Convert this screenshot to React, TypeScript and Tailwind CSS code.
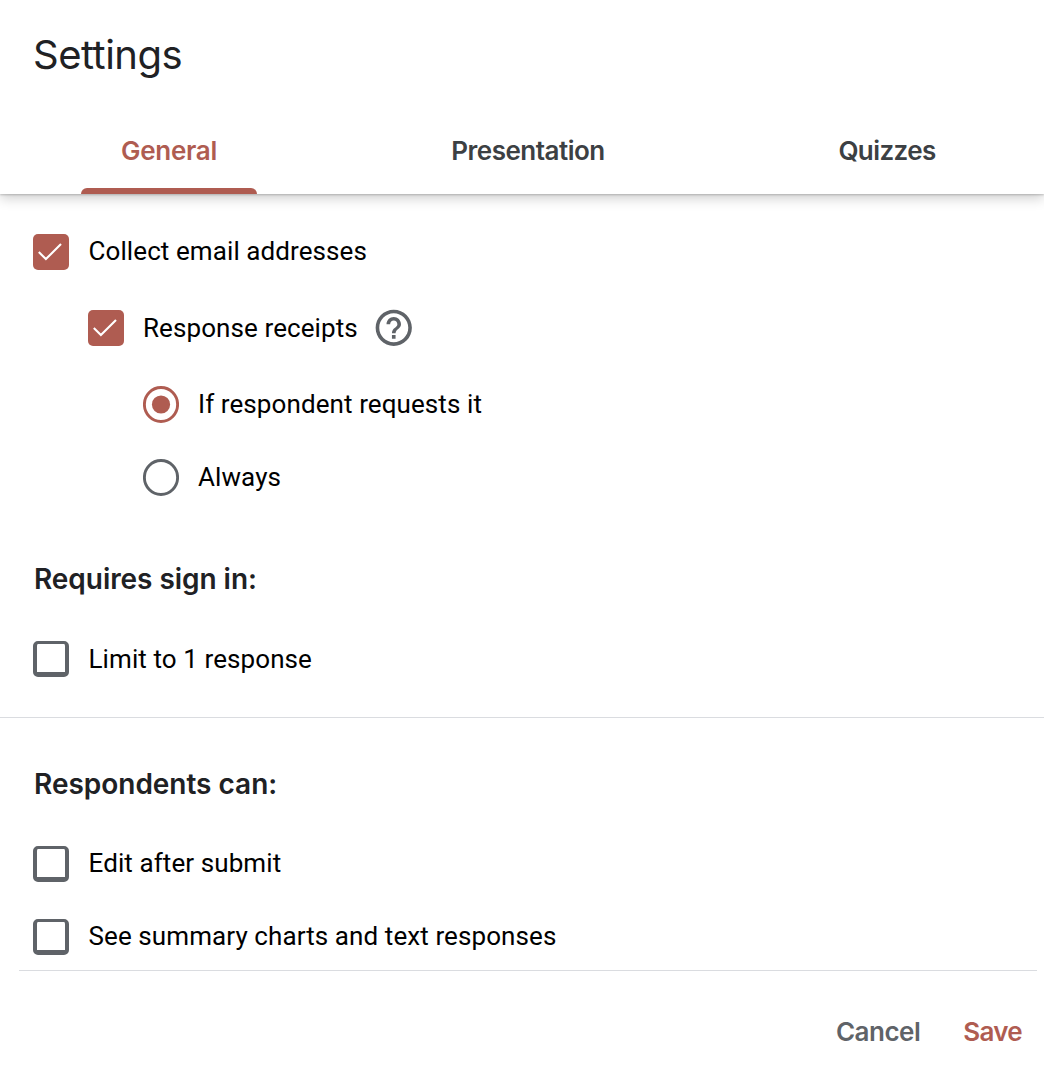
import type { ReactNode } from "react";
import { MdHelpOutline } from "react-icons/md";

const display = "font-['Inter',sans-serif]";

function Checkbox({ checked = false }: { checked?: boolean }) {
  if (checked) {
    return (
      <span className="block size-9 shrink-0 rounded-[5px] bg-[#af5c51]">
        <svg viewBox="0 0 36 36" className="size-9" fill="none" stroke="#fff" strokeWidth="2.1">
          <path d="M5.8 18.1l7.1 7L28 10" />
        </svg>
      </span>
    );
  }
  return (
    <span className="block size-9 shrink-0 rounded-[5px] border-x-4 border-t-3 border-b-5 border-[#5f6368]" />
  );
}

function Radio({ selected = false }: { selected?: boolean }) {
  return (
    <svg viewBox="0 0 36 37" className="h-[37px] w-9 shrink-0" fill="none">
      <ellipse cx="18" cy="18.5" rx="16.6" ry="17" stroke={selected ? "#af5c51" : "#5f6368"} strokeWidth="2.9" />
      {selected && <circle cx="18" cy="18.5" r="9.1" fill="#af5c51" />}
    </svg>
  );
}

function Option({ control, label, className = "", labelClass = "ml-[19px]", children }: { control: ReactNode; label: string; className?: string; labelClass?: string; children?: ReactNode }) {
  return (
    <div className={`flex h-9 items-center ${className}`}>
      {control}
      <span className={`text-[26px] leading-9 tracking-[0.09px] whitespace-nowrap text-black ${labelClass}`}>{label}</span>
      {children}
    </div>
  );
}

export default function App() {
  return (
    <div className="flex h-[1090px] w-[1044px] flex-col overflow-hidden bg-white font-['Roboto',sans-serif]">
      <header className="h-[194px] shrink-0 shadow-[0_1px_2px_rgba(0,0,0,0.2),0_4px_12px_rgba(0,0,0,0.2)]">
        <h1 className={`${display} pt-[30px] pl-[33px] text-[40px] leading-[50px] tracking-[-0.5px] text-[#202124]`}>Settings</h1>
        <nav className={`${display} mt-[28px] grid h-[86px] grid-cols-[338px_380px_338px] text-center text-[26px] font-semibold text-[#3c4043]`}>
          <div className="flex flex-col items-center justify-between pt-[23px] text-[#af5c51]">
            <span className="leading-[40px] tracking-[-0.3px]">General</span>
            <span className="h-1.5 w-44 rounded-t-[6px] bg-[#af5c51]" />
          </div>
          <div className="pt-[23px] leading-[40px] tracking-[-0.5px]">Presentation</div>
          <div className="pt-[23px] leading-[40px] tracking-[-0.6px]">Quizzes</div>
        </nav>
      </header>

      <section className="h-[524px] shrink-0 border-b border-[#dadce0] pt-10 pl-[33px]">
        <Option control={<Checkbox checked />} label="Collect email addresses" labelClass="ml-[19.5px] pb-0.5" />
        <Option control={<Checkbox checked />} label="Response receipts" className="mt-10 ml-[55px]">
          <MdHelpOutline className="-mt-px ml-[14.5px] size-[43.5px] text-[#5f6368]" />
        </Option>
        <Option control={<Radio selected />} label="If respondent requests it" className="mt-10 ml-[110px]" />
        <Option control={<Radio />} label="Always" className="mt-[37px] ml-[110px]" />
        <h2 className={`${display} mt-[64px] ml-px text-[28px] leading-[40px] font-semibold tracking-[-0.05px] text-[#202124]`}>Requires sign in:</h2>
        <Option control={<Checkbox />} label="Limit to 1 response" className="mt-[42px]" labelClass="ml-[19.5px]" />
      </section>

      <section className="h-[252px] shrink-0 pt-[46px] pl-[33px]">
        <h2 className={`${display} ml-px text-[28px] leading-[40px] font-semibold tracking-[-0.02px] text-[#202124]`}>Respondents can:</h2>
        <Option control={<Checkbox />} label="Edit after submit" className="mt-[42px]" labelClass="ml-[19.5px] pb-0.5" />
        <Option control={<Checkbox />} label="See summary charts and text responses" className="mt-[37px]" labelClass="ml-[19.5px] pb-0.5" />
      </section>

      <footer className={`${display} mr-[7px] ml-[19px] flex flex-1 justify-end gap-[43px] border-t border-[#dadce0] pt-[41px] pr-[15px] text-[26px] leading-[40px] font-semibold`}>
        <button className="h-10 tracking-[-0.5px] text-[#5f6368]">Cancel</button>
        <button className="h-10 tracking-[-0.7px] text-[#af5c51]">Save</button>
      </footer>
    </div>
  );
}
